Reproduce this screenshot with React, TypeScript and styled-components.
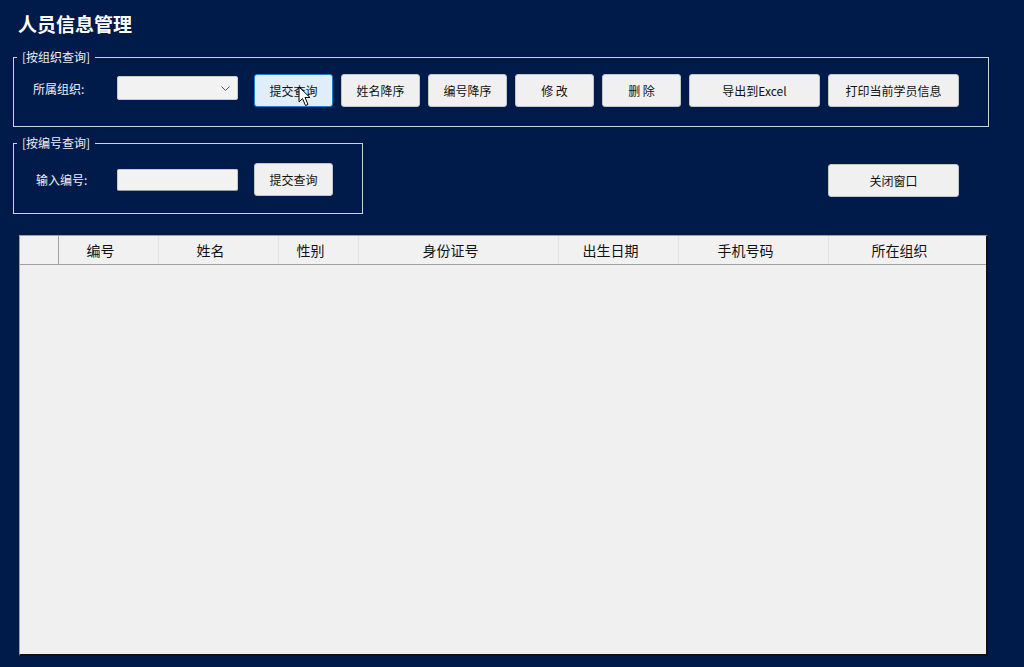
import React from "react";
import styled, { createGlobalStyle } from "styled-components";

const Global = createGlobalStyle`
  html, body {
    margin: 0;
    padding: 0;
    background: #001b4a;
    font-family: "Microsoft YaHei", "Noto Sans CJK SC", "Noto Sans", sans-serif;
  }
  #root { min-height: 667px; }
`;

const Page = styled.div`
  display: flex;
  flex-direction: column;
  align-items: flex-start;
  padding: 12px 0 0 13px;
  width: 1024px;
  height: 667px;
  box-sizing: border-box;
  overflow: hidden;
`;

const Title = styled.h1`
  margin: 0 0 13px 5px;
  font-size: 19px;
  line-height: 24px;
  font-weight: 700;
  color: #ffffff;
  letter-spacing: 0;
`;

const GroupBox = styled.fieldset<{ $width: number; $pt: number; $pb: number }>`
  margin: 0;
  width: ${(p) => p.$width}px;
  box-sizing: border-box;
  border: 1px solid #cfd3da;
  padding: ${(p) => p.$pt}px 0 ${(p) => p.$pb}px 0;
  min-inline-size: 0;
`;

const Legend = styled.legend`
  margin-left: 3px;
  padding: 0 5px;
  font-size: 12px;
  line-height: 16px;
  color: #eef0f4;
`;

const Row = styled.div`
  display: flex;
  align-items: center;
  gap: 8px;
`;

const Label = styled.span<{ $indent: number; $lift?: number }>`
  box-sizing: border-box;
  width: 95px;
  padding-left: ${(p) => p.$indent}px;
  margin-top: ${(p) => -(p.$lift ?? 0)}px;
  font-size: 12px;
  line-height: 16px;
  color: #eef0f4;
  white-space: nowrap;
`;

const Combo = styled.div`
  position: relative;
  box-sizing: border-box;
  width: 121px;
  height: 24px;
  margin-right: 8px;
  margin-top: -5px;
  background: #f2f2f2;
  border: 1px solid #c9c9c9;
  border-radius: 2px;
  display: flex;
  align-items: center;
  justify-content: flex-end;
  padding-right: 7px;
`;

const TextInput = styled.div`
  box-sizing: border-box;
  width: 121px;
  height: 22px;
  margin-right: 8px;
  background: #f2f2f2;
  border: 1px solid #c9c9c9;
  border-bottom-color: #9a9a9a;
  border-radius: 2px;
`;

const Button = styled.button<{ $w: number; $hover?: boolean }>`
  position: relative;
  box-sizing: border-box;
  width: ${(p) => p.$w}px;
  height: 33px;
  padding: 0;
  border-radius: 3px;
  border: 1px solid ${(p) => (p.$hover ? "#1a7fd4" : "#c4c4c4")};
  background: ${(p) => (p.$hover ? "#e1eefa" : "#f0f0f0")};
  color: #111;
  font-family: inherit;
  font-size: 12px;
  line-height: 16px;
  cursor: default;
`;

const Cursor = styled.svg`
  position: absolute;
  left: 43px;
  top: 11px;
`;

const SecondRow = styled.div`
  display: flex;
  align-items: flex-start;
  width: 976px;
  margin-top: 8px;
`;

const CloseButton = styled(Button)`
  margin-left: auto;
  margin-right: 30px;
  margin-top: 29px;
`;

const Table = styled.div`
  margin: 21px 0 0 6px;
  width: 969px;
  height: 421px;
  box-sizing: border-box;
  background: #f0f0f0;
  border-top: 1px solid #a0a0a0;
  border-left: 1px solid #a0a0a0;
  border-right: 2px solid #111;
  border-bottom: 2px solid #111;
`;

const HeaderRow = styled.div`
  display: grid;
  grid-template-columns: 39px 100px 120px 80px 200px 120px 150px 1fr;
  height: 28px;
  border-bottom: 1px solid #a0a0a0;
  background: #f1f1f1;
`;

const HeaderCell = styled.div<{ $corner?: boolean }>`
  display: flex;
  align-items: center;
  justify-content: center;
  padding-right: ${(p) => (p.$corner ? 0 : 16)}px;
  font-size: 14px;
  color: #111;
  border-right: 1px solid ${(p) => (p.$corner ? "#a0a0a0" : "#e2e2e2")};
  &:last-child { border-right: none; }
`;

const columns = ["编号", "姓名", "性别", "身份证号", "出生日期", "手机号码", "所在组织"];

export default function App() {
  return (
    <>
      <Global />
      <Page>
        <Title>人员信息管理</Title>
        <GroupBox $width={976} $pt={9} $pb={19}>
          <Legend>[按组织查询]</Legend>
          <Row>
            <Label $indent={19} $lift={3}>所属组织:</Label>
            <Combo>
              <svg width="9" height="5" viewBox="0 0 9 5">
                <polyline points="0.5,0.5 4.5,4.5 8.5,0.5" fill="none" stroke="#555" strokeWidth="1" />
              </svg>
            </Combo>
            <Button $w={79} $hover>
              提交查询
              <Cursor width="14" height="21" viewBox="0 0 14 21">
                <path
                  d="M1 1 L1 16 L4.5 12.5 L7.5 19.5 L10 18.5 L7 11.5 L12 11.5 Z"
                  fill="#fff"
                  stroke="#000"
                  strokeWidth="1"
                  strokeLinejoin="miter"
                />
              </Cursor>
            </Button>
            <Button $w={79}>姓名降序</Button>
            <Button $w={79}>编号降序</Button>
            <Button $w={79}>修 改</Button>
            <Button $w={79}>删 除</Button>
            <Button $w={131}>导出到Excel</Button>
            <Button $w={131}>打印当前学员信息</Button>
          </Row>
        </GroupBox>
        <SecondRow>
          <GroupBox $width={350} $pt={12} $pb={17}>
            <Legend>[按编号查询]</Legend>
            <Row>
              <Label $indent={22}>输入编号:</Label>
              <TextInput />
              <Button $w={79}>提交查询</Button>
            </Row>
          </GroupBox>
          <CloseButton $w={131}>关闭窗口</CloseButton>
        </SecondRow>
        <Table>
          <HeaderRow>
            <HeaderCell $corner />
            {columns.map((c) => (
              <HeaderCell key={c}>{c}</HeaderCell>
            ))}
          </HeaderRow>
        </Table>
      </Page>
    </>
  );
}
